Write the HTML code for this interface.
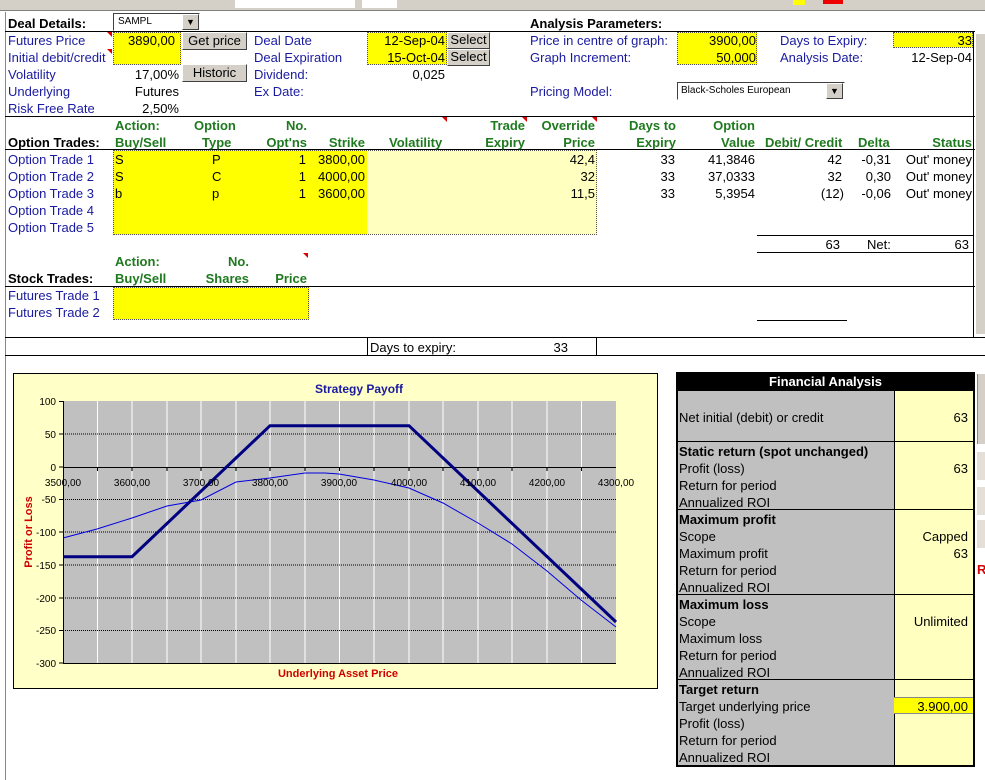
<!DOCTYPE html>
<html><head><meta charset="utf-8"><style>
*{margin:0;padding:0;box-sizing:border-box}
body{width:985px;height:780px;background:#fff;position:relative;overflow:hidden;font-family:"Liberation Sans",Arial,sans-serif;font-size:13px;color:#000}
div{position:absolute}
.t{line-height:17px;height:17px;white-space:nowrap;margin-top:1px}
.b{color:#1a1aa0}
.g{color:#1f7a1f;font-weight:bold}
.k{font-weight:bold}
.r{text-align:right}
.y{background:#ffff00}
.ly{background:#ffffc0}
.hl{height:1px;background:#000}
.vl{width:1px;background:#000}
.btn{background:#d4d0c8;border:1px solid;border-color:#fff #404040 #404040 #fff;line-height:14px;text-align:center;font-size:13px}
.tri{width:0;height:0;border-top:5px solid #d00;border-left:5px solid transparent}
.fa{font-size:13px;line-height:17px;height:17px;white-space:nowrap;margin-top:1px}
</style></head><body>
<div style="left:0;top:0;width:985px;height:11px;background:#d4d0c8;border-bottom:1px solid #808080"></div>
<div style="left:235px;top:0;width:120px;height:8px;background:#fff"></div>
<div style="left:362px;top:0;width:35px;height:8px;background:#fff"></div>
<div style="left:793px;top:0;width:12px;height:5px;background:#ff0"></div>
<div style="left:823px;top:0;width:20px;height:4px;background:#e00"></div>
<div class="vl" style="left:5px;top:12px;height:768px;background:#888"></div>
<div class="hl" style="left:5px;top:31px;width:970px"></div>
<div class="hl" style="left:5px;top:116px;width:970px"></div>
<div class="hl" style="left:5px;top:149px;width:970px"></div>
<div class="hl" style="left:5px;top:286px;width:970px"></div>
<div class="hl" style="left:5px;top:337px;width:980px"></div>
<div class="hl" style="left:5px;top:355px;width:980px"></div>
<div class="vl" style="left:973px;top:31px;height:306px"></div>
<div class="hl" style="left:757px;top:235px;width:216px"></div>
<div class="hl" style="left:757px;top:252px;width:216px"></div>
<div class="hl" style="left:757px;top:320px;width:90px"></div>
<div class="vl" style="left:367px;top:337px;height:18px"></div>
<div class="vl" style="left:596px;top:337px;height:18px"></div>
<div style="left:976px;top:34px;width:9px;height:300px;background:#d4d0c8"></div>
<div style="left:977px;top:374px;width:8px;height:70px;background:#d4d0c8;border-left:1px solid #888"></div>
<div style="left:977px;top:452px;width:8px;height:28px;background:#e4e0d8"></div>
<div style="left:977px;top:487px;width:8px;height:28px;background:#e4e0d8"></div>
<div style="left:977px;top:520px;width:8px;height:28px;background:#e4e0d8"></div>
<div class="t" style="left:977px;top:560px;color:#d00;font-weight:bold">R</div>

<div class="y" style="left:113px;top:32px;width:68px;height:33px;border:1px dotted #555"></div>
<div class="y" style="left:367px;top:32px;width:80px;height:33px;border:1px dotted #555"></div>
<div class="y" style="left:677px;top:32px;width:80px;height:33px;border:1px dotted #555"></div>
<div class="y" style="left:893px;top:32px;width:80px;height:16px;border:1px dotted #555"></div>
<div class="y" style="left:113px;top:150px;width:254px;height:85px"></div>
<div class="ly" style="left:367px;top:150px;width:230px;height:85px"></div>
<div style="left:113px;top:150px;width:484px;height:85px;border:1px dotted #555"></div>
<div class="y" style="left:113px;top:287px;width:196px;height:33px;border:1px dotted #555"></div>

<div style="left:113px;top:13px;width:87px;height:18px;border:1px solid #000;border-color:#404040 #fff #fff #404040;background:#fff;font-size:10px;line-height:16px;padding-left:4px">SAMPL</div>
<div class="btn" style="left:182px;top:14px;width:17px;height:16px;font-size:9px">▼</div>
<div style="left:677px;top:82px;width:168px;height:18px;border:1px solid;border-color:#404040 #fff #fff #404040;background:#fff;font-size:10px;line-height:16px;padding-left:3px">Black-Scholes European</div>
<div class="btn" style="left:826px;top:83px;width:17px;height:16px;font-size:9px">▼</div>
<div class="btn" style="left:182px;top:32px;width:65px;height:18px;line-height:16px">Get price</div>
<div class="btn" style="left:182px;top:64px;width:65px;height:18px;line-height:16px">Historic</div>
<div class="btn" style="left:447px;top:32px;width:43px;height:17px">Select</div>
<div class="btn" style="left:447px;top:49px;width:43px;height:17px">Select</div>
<div class="tri" style="left:107px;top:32px"></div>
<div class="tri" style="left:107px;top:49px"></div>
<div class="tri" style="left:442px;top:117px"></div>
<div class="tri" style="left:522px;top:117px"></div>
<div class="tri" style="left:592px;top:117px"></div>
<div class="tri" style="left:303px;top:253px"></div>

<div class="t k" style="left:8px;top:14px">Deal Details:</div>
<div class="t k" style="left:530px;top:14px">Analysis Parameters:</div>
<div class="t b" style="left:8px;top:31px">Futures Price</div>
<div class="t b" style="left:8px;top:48px">Initial debit/credit</div>
<div class="t b" style="left:8px;top:65px">Volatility</div>
<div class="t b" style="left:8px;top:82px">Underlying</div>
<div class="t b" style="left:8px;top:99px">Risk Free Rate</div>
<div class="t r" style="right:810px;top:31px">3890,00</div>
<div class="t r" style="right:806px;top:65px">17,00%</div>
<div class="t r" style="right:806px;top:82px">Futures</div>
<div class="t r" style="right:806px;top:99px">2,50%</div>
<div class="t b" style="left:254px;top:31px">Deal Date</div>
<div class="t b" style="left:254px;top:48px">Deal Expiration</div>
<div class="t b" style="left:254px;top:65px">Dividend:</div>
<div class="t b" style="left:254px;top:82px">Ex Date:</div>
<div class="t r" style="right:540px;top:31px">12-Sep-04</div>
<div class="t r" style="right:540px;top:48px">15-Oct-04</div>
<div class="t r" style="right:540px;top:65px">0,025</div>
<div class="t b" style="left:530px;top:31px">Price in centre of graph:</div>
<div class="t b" style="left:530px;top:48px">Graph Increment:</div>
<div class="t b" style="left:530px;top:82px">Pricing Model:</div>
<div class="t r" style="right:229px;top:31px">3900,00</div>
<div class="t r" style="right:229px;top:48px">50,000</div>
<div class="t b" style="left:780px;top:31px">Days to Expiry:</div>
<div class="t b" style="left:780px;top:48px">Analysis Date:</div>
<div class="t r" style="right:13px;top:31px">33</div>
<div class="t r" style="right:13px;top:48px">12-Sep-04</div>

<div class="t g" style="left:115px;top:116px">Action:</div>
<div class="t g" style="left:115px;top:133px">Buy/Sell</div>
<div class="t k" style="left:8px;top:133px">Option Trades:</div>
<div class="t g" style="left:194px;top:116px">Option</div>
<div class="t g" style="left:202px;top:133px">Type</div>
<div class="t g r" style="right:678px;top:116px">No.</div>
<div class="t g r" style="right:678px;top:133px">Opt'ns</div>
<div class="t g r" style="right:620px;top:133px">Strike</div>
<div class="t g" style="left:389px;top:133px">Volatility</div>
<div class="t g r" style="right:460px;top:116px">Trade</div>
<div class="t g r" style="right:460px;top:133px">Expiry</div>
<div class="t g r" style="right:390px;top:116px">Override</div>
<div class="t g r" style="right:390px;top:133px">Price</div>
<div class="t g r" style="right:309px;top:116px">Days to</div>
<div class="t g r" style="right:309px;top:133px">Expiry</div>
<div class="t g r" style="right:230px;top:116px">Option</div>
<div class="t g r" style="right:230px;top:133px">Value</div>
<div class="t g" style="left:765px;top:133px">Debit/ Credit</div>
<div class="t g" style="left:858px;top:133px">Delta</div>
<div class="t g r" style="right:13px;top:133px">Status</div>

<div class="t b" style="left:8px;top:150px">Option Trade 1</div>
<div class="t b" style="left:8px;top:167px">Option Trade 2</div>
<div class="t b" style="left:8px;top:184px">Option Trade 3</div>
<div class="t b" style="left:8px;top:201px">Option Trade 4</div>
<div class="t b" style="left:8px;top:218px">Option Trade 5</div>
<div class="t" style="left:115px;top:150px">S</div>
<div class="t" style="left:115px;top:167px">S</div>
<div class="t" style="left:115px;top:184px">b</div>
<div class="t" style="left:212px;top:150px">P</div>
<div class="t" style="left:212px;top:167px">C</div>
<div class="t" style="left:212px;top:184px">p</div>
<div class="t r" style="right:679px;top:150px">1</div>
<div class="t r" style="right:679px;top:167px">1</div>
<div class="t r" style="right:679px;top:184px">1</div>
<div class="t r" style="right:620px;top:150px">3800,00</div>
<div class="t r" style="right:620px;top:167px">4000,00</div>
<div class="t r" style="right:620px;top:184px">3600,00</div>
<div class="t r" style="right:390px;top:150px">42,4</div>
<div class="t r" style="right:390px;top:167px">32</div>
<div class="t r" style="right:390px;top:184px">11,5</div>
<div class="t r" style="right:310px;top:150px">33</div>
<div class="t r" style="right:310px;top:167px">33</div>
<div class="t r" style="right:310px;top:184px">33</div>
<div class="t r" style="right:230px;top:150px">41,3846</div>
<div class="t r" style="right:230px;top:167px">37,0333</div>
<div class="t r" style="right:230px;top:184px">5,3954</div>
<div class="t r" style="right:143px;top:150px">42</div>
<div class="t r" style="right:143px;top:167px">32</div>
<div class="t r" style="right:141px;top:184px">(12)</div>
<div class="t r" style="right:94px;top:150px">-0,31</div>
<div class="t r" style="right:94px;top:167px">0,30</div>
<div class="t r" style="right:94px;top:184px">-0,06</div>
<div class="t r" style="right:13px;top:150px">Out' money</div>
<div class="t r" style="right:13px;top:167px">Out' money</div>
<div class="t r" style="right:13px;top:184px">Out' money</div>
<div class="t r" style="right:145px;top:235px">63</div>
<div class="t" style="left:867px;top:235px">Net:</div>
<div class="t r" style="right:16px;top:235px">63</div>

<div class="t g" style="left:115px;top:252px">Action:</div>
<div class="t g" style="left:115px;top:269px">Buy/Sell</div>
<div class="t k" style="left:8px;top:269px">Stock Trades:</div>
<div class="t g r" style="right:736px;top:252px">No.</div>
<div class="t g r" style="right:736px;top:269px">Shares</div>
<div class="t g r" style="right:678px;top:269px">Price</div>
<div class="t b" style="left:8px;top:286px">Futures Trade 1</div>
<div class="t b" style="left:8px;top:303px">Futures Trade 2</div>
<div class="t" style="left:370px;top:338px">Days to expiry:</div>
<div class="t r" style="right:417px;top:338px">33</div>

<svg style="position:absolute;left:0;top:0" width="985" height="780">
<rect x="13.5" y="373.5" width="644" height="315" fill="#ffffc8" stroke="#000"/>
<rect x="63" y="401" width="553" height="262" fill="#c0c0c0"/>
<g stroke="#fff" stroke-width="1">
<line x1="97.5" y1="401" x2="97.5" y2="663"/><line x1="132" y1="401" x2="132" y2="663"/><line x1="167" y1="401" x2="167" y2="663"/><line x1="201" y1="401" x2="201" y2="663"/><line x1="236" y1="401" x2="236" y2="663"/><line x1="270" y1="401" x2="270" y2="663"/><line x1="305" y1="401" x2="305" y2="663"/><line x1="339.5" y1="401" x2="339.5" y2="663"/><line x1="374" y1="401" x2="374" y2="663"/><line x1="409" y1="401" x2="409" y2="663"/><line x1="443" y1="401" x2="443" y2="663"/><line x1="478" y1="401" x2="478" y2="663"/><line x1="512" y1="401" x2="512" y2="663"/><line x1="547" y1="401" x2="547" y2="663"/><line x1="581.5" y1="401" x2="581.5" y2="663"/>
</g>
<g stroke="#000" stroke-dasharray="1,1">
<line x1="63" y1="434" x2="616" y2="434"/><line x1="63" y1="499.5" x2="616" y2="499.5"/><line x1="63" y1="532" x2="616" y2="532"/><line x1="63" y1="565" x2="616" y2="565"/><line x1="63" y1="598" x2="616" y2="598"/><line x1="63" y1="630.5" x2="616" y2="630.5"/>
</g>
<line x1="63.5" y1="401" x2="63.5" y2="663" stroke="#000"/>
<line x1="63" y1="663.5" x2="616" y2="663.5" stroke="#000"/>
<line x1="63" y1="467.5" x2="616" y2="467.5" stroke="#000"/>
<g stroke="#000">
<line x1="59" y1="401.5" x2="63" y2="401.5"/><line x1="59" y1="434" x2="63" y2="434"/><line x1="59" y1="467" x2="63" y2="467"/><line x1="59" y1="499.5" x2="63" y2="499.5"/><line x1="59" y1="532" x2="63" y2="532"/><line x1="59" y1="565" x2="63" y2="565"/><line x1="59" y1="598" x2="63" y2="598"/><line x1="59" y1="630.5" x2="63" y2="630.5"/><line x1="59" y1="663" x2="63" y2="663"/>
<line x1="97.5" y1="467" x2="97.5" y2="471"/><line x1="132" y1="467" x2="132" y2="471"/><line x1="167" y1="467" x2="167" y2="471"/><line x1="201" y1="467" x2="201" y2="471"/><line x1="236" y1="467" x2="236" y2="471"/><line x1="270" y1="467" x2="270" y2="471"/><line x1="305" y1="467" x2="305" y2="471"/><line x1="339.5" y1="467" x2="339.5" y2="471"/><line x1="374" y1="467" x2="374" y2="471"/><line x1="409" y1="467" x2="409" y2="471"/><line x1="443" y1="467" x2="443" y2="471"/><line x1="478" y1="467" x2="478" y2="471"/><line x1="512" y1="467" x2="512" y2="471"/><line x1="547" y1="467" x2="547" y2="471"/><line x1="581.5" y1="467" x2="581.5" y2="471"/>
</g>
<polyline fill="none" stroke="#0000e0" stroke-width="1" points="63,538 97,529 132,518 167,506 201,500 236,482 270,478 305,473 325,473 339,474 374,480 409,488 443,503 478,523 512,544 547,571 581,600 616,627"/>
<polyline fill="none" stroke="#000080" stroke-width="3" points="63,556.7 132,556.7 270,425.7 409,425.7 616,622"/>
<g font-family="Liberation Sans,Arial,sans-serif" font-size="10" fill="#000" text-anchor="end">
<text x="56" y="405">100</text><text x="56" y="438">50</text><text x="56" y="471">0</text><text x="56" y="503">-50</text><text x="56" y="536">-100</text><text x="56" y="569">-150</text><text x="56" y="602">-200</text><text x="56" y="634">-250</text><text x="56" y="667">-300</text>
</g>
<g font-family="Liberation Sans,Arial,sans-serif" font-size="10" fill="#000" text-anchor="middle">
<text x="63" y="486">3500,00</text><text x="132" y="486">3600,00</text><text x="201" y="486">3700,00</text><text x="270" y="486">3800,00</text><text x="339" y="486">3900,00</text><text x="409" y="486">4000,00</text><text x="478" y="486">4100,00</text><text x="547" y="486">4200,00</text><text x="616" y="486">4300,00</text>
</g>
<text x="359" y="393" text-anchor="middle" font-family="Liberation Sans,Arial,sans-serif" font-size="12" font-weight="bold" fill="#1a1aa0">Strategy Payoff</text>
<text x="338" y="677" text-anchor="middle" font-family="Liberation Sans,Arial,sans-serif" font-size="11" font-weight="bold" fill="#d00000">Underlying Asset Price</text>
<text transform="translate(32,532) rotate(-90)" text-anchor="middle" font-family="Liberation Sans,Arial,sans-serif" font-size="11" font-weight="bold" fill="#d00000">Profit or Loss</text>
</svg>

<div style="left:676px;top:372px;width:299px;height:395px;border:2px solid #000;background:#c0c0c0"></div>
<div style="left:676px;top:372px;width:299px;height:19px;background:#000;color:#fff;font-weight:bold;text-align:center;line-height:19px">Financial Analysis</div>
<div class="ly" style="left:894px;top:391px;width:79px;height:374px;border-left:1px solid #000"></div>
<div class="hl" style="left:677px;top:441px;width:297px"></div>
<div class="hl" style="left:677px;top:509px;width:297px"></div>
<div class="hl" style="left:677px;top:594px;width:297px"></div>
<div class="hl" style="left:677px;top:679px;width:297px"></div>
<div class="y" style="left:894px;top:697px;width:79px;height:17px;border-top:1px solid #888;border-bottom:1px solid #888"></div>
<div class="fa" style="left:679px;top:408px">Net initial (debit) or credit</div>
<div class="fa r" style="right:17px;top:408px">63</div>
<div class="fa k" style="left:679px;top:442px">Static return (spot unchanged)</div>
<div class="fa" style="left:679px;top:459px">Profit (loss)</div>
<div class="fa r" style="right:17px;top:459px">63</div>
<div class="fa" style="left:679px;top:476px">Return for period</div>
<div class="fa" style="left:679px;top:493px">Annualized ROI</div>
<div class="fa k" style="left:679px;top:510px">Maximum profit</div>
<div class="fa" style="left:679px;top:527px">Scope</div>
<div class="fa r" style="right:17px;top:527px">Capped</div>
<div class="fa" style="left:679px;top:544px">Maximum profit</div>
<div class="fa r" style="right:17px;top:544px">63</div>
<div class="fa" style="left:679px;top:561px">Return for period</div>
<div class="fa" style="left:679px;top:578px">Annualized ROI</div>
<div class="fa k" style="left:679px;top:595px">Maximum loss</div>
<div class="fa" style="left:679px;top:612px">Scope</div>
<div class="fa r" style="right:17px;top:612px">Unlimited</div>
<div class="fa" style="left:679px;top:629px">Maximum loss</div>
<div class="fa" style="left:679px;top:646px">Return for period</div>
<div class="fa" style="left:679px;top:663px">Annualized ROI</div>
<div class="fa k" style="left:679px;top:680px">Target return</div>
<div class="fa" style="left:679px;top:697px">Target underlying price</div>
<div class="fa r" style="right:17px;top:697px">3.900,00</div>
<div class="fa" style="left:679px;top:714px">Profit (loss)</div>
<div class="fa" style="left:679px;top:731px">Return for period</div>
<div class="fa" style="left:679px;top:748px">Annualized ROI</div>
</body></html>
